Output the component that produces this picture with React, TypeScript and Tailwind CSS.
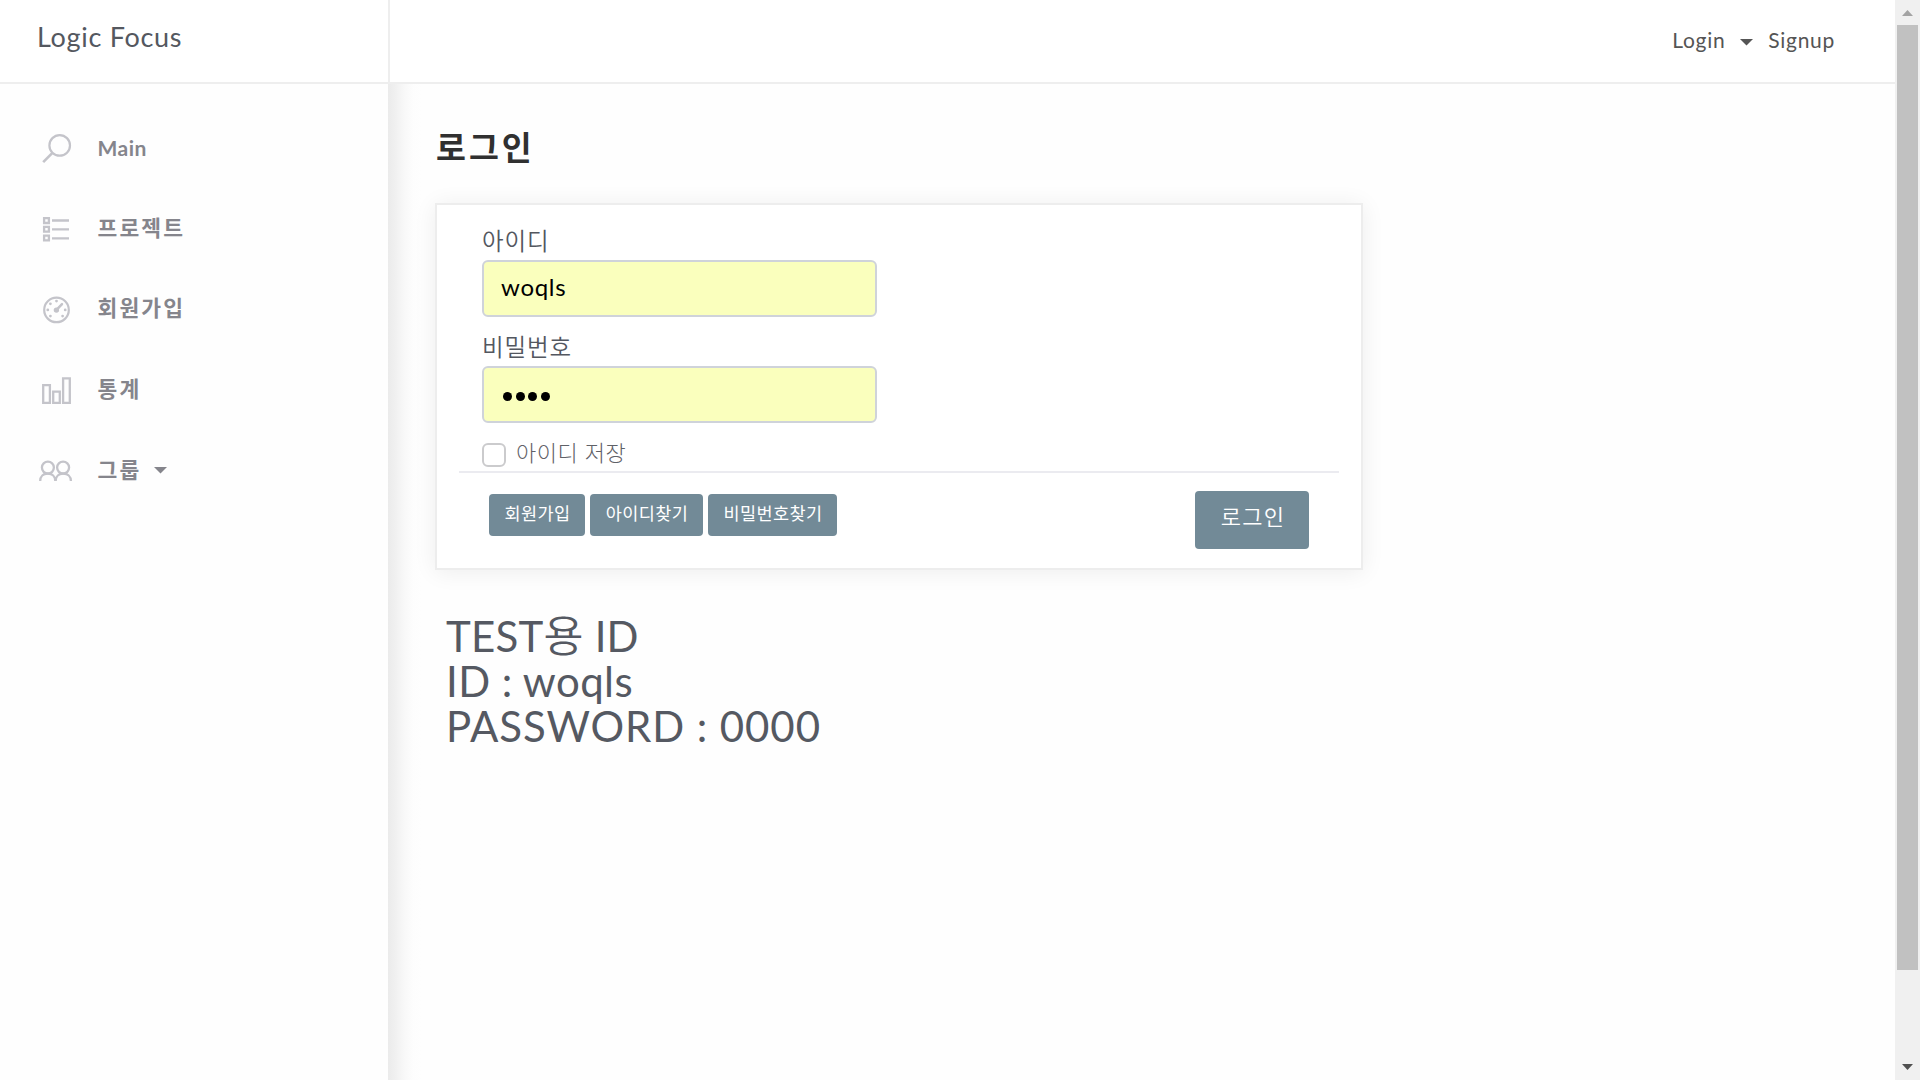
import React from "react";

type NavEntry = { label: string; icon: React.ReactNode; caret?: boolean; className: string };

const SearchIcon = () => (
  <svg width="36" height="36" viewBox="0 0 36 36" fill="none" stroke="#c4c4ca" strokeWidth="2.2">
    <circle cx="21.7" cy="15.4" r="10.3" />
    <path d="M14.2 23.1 5.2 32.1" strokeWidth="2.6" />
  </svg>
);

const ListIcon = () => (
  <svg width="36" height="36" viewBox="0 0 36 36" fill="none" stroke="#c4c4ca" strokeWidth="2.3">
    <path d="M6.1 7.2h4.8v4.8H6.1zM6.1 15.9h4.8v4.8H6.1zM6.1 24.6h4.8v4.8H6.1z" />
    <path d="M14 9.5h17M14 18.4h17M14 27.3h17" />
  </svg>
);

const GaugeIcon = () => (
  <svg width="36" height="36" viewBox="0 0 36 36" fill="none" stroke="#c4c4ca" strokeWidth="2.2">
    <circle cx="18.5" cy="18.9" r="12.3" />
    <path d="M18.5 18.9 24 13.1" strokeWidth="2.5" strokeLinecap="round" />
    <circle cx="18.4" cy="19.1" r="1.6" fill="#c4c4ca" />
    <g fill="#c4c4ca" stroke="none">
      <circle cx="18.5" cy="10.1" r="1.4" />
      <circle cx="12.4" cy="12.8" r="1.4" />
      <circle cx="9.8" cy="18.9" r="1.4" />
      <circle cx="12.4" cy="25.1" r="1.4" />
      <circle cx="24.6" cy="25.1" r="1.4" />
      <circle cx="27.2" cy="18.9" r="1.4" />
    </g>
  </svg>
);

const ChartIcon = () => (
  <svg width="36" height="36" viewBox="0 0 36 36" fill="none" stroke="#c4c4ca" strokeWidth="2.3">
    <path d="M5.2 13.2h6.7v17.6H5.2zM15.2 19.6h6.6v11.2h-6.6zM25.1 6.3h6.7v24.5h-6.7z" />
  </svg>
);

const PeopleIcon = () => (
  <svg width="36" height="36" viewBox="0 0 36 36" fill="none" stroke="#c4c4ca" strokeWidth="2.3">
    <circle cx="9.9" cy="14.6" r="6" />
    <circle cx="25.1" cy="14.6" r="6" />
    <path d="M2.2 27.9c0-4.6 3.2-7.4 7.5-7.4s7.6 2.8 7.6 7.4M17.7 27.9c0-4.6 3.2-7.4 7.5-7.4s7.7 2.8 7.7 7.4" />
  </svg>
);

const Caret = ({ color }: { color: string }) => (
  <svg width="13" height="7" viewBox="0 0 13 7" fill={color}>
    <path d="M0 0h13L6.5 6.5z" />
  </svg>
);

const nav: NavEntry[] = [
  { label: "Main", icon: <SearchIcon />, className: "tracking-[0.5px] font-bold text-[21px]" },
  { label: "프로젝트", icon: <ListIcon />, className: "tracking-[2.1px] font-bold text-[21.5px]" },
  { label: "회원가입", icon: <GaugeIcon />, className: "tracking-[2.1px] font-bold text-[21.5px]" },
  { label: "통계", icon: <ChartIcon />, className: "tracking-[2.1px] font-bold text-[21.5px]" },
  { label: "그룹", icon: <PeopleIcon />, caret: true, className: "tracking-[2.1px] font-bold text-[21.5px]" },
];

function Sidebar() {
  return (
    <aside className="w-[388px] shrink-0 bg-[#fefefe] pl-[38px] pt-[24px]">
      {nav.map((n) => (
        <a key={n.label} className="flex h-[80.6px] items-center text-[#85858c]">
          <span className="w-[59.5px]">{n.icon}</span>
          <span className={`mb-[2px] ${n.className}`}>{n.label}</span>
          {n.caret && <span className="ml-[13px]"><Caret color="#85858c" /></span>}
        </a>
      ))}
    </aside>
  );
}

function SmallButton({ children, width }: { children: string; width: string }) {
  return (
    <button className={`${width} h-[42px] rounded-[4px] bg-[#728a97] pb-[2px] pl-[1px] text-[17.5px] leading-none tracking-[0.4px] text-white`}>
      {children}
    </button>
  );
}

function LoginCard() {
  return (
    <section className="h-[367px] w-[928px] border-2 border-[#ededed] bg-white px-[22px] pt-[20px] shadow-[0_2px_22px_rgba(0,0,0,0.07)]">
      <div className="h-[246px] pl-[23px] text-[#53575f]">
        <div className="h-[35px] text-[23.5px] font-[350] leading-[33px] tracking-[0.9px]">아이디</div>
        <div className="flex h-[57px] w-[395px] items-center rounded-[6px] border-2 border-[#cfd3da] bg-[#faffbd] pb-[3px] pl-[17px] text-[24px] leading-none tracking-[0.7px] text-black">
          woqls
        </div>
        <div className="mt-[14px] h-[35px] text-[23.5px] font-[350] leading-[33px] tracking-[0.9px]">비밀번호</div>
        <div className="flex h-[57px] w-[395px] items-center gap-[3.6px] rounded-[6px] border-2 border-[#cfd3da] bg-[#faffbd] pl-[19px] pt-[4px]">
          {[0, 1, 2, 3].map((i) => (
            <span key={i} className="size-[9px] rounded-full bg-black" />
          ))}
        </div>
        <div className="mt-[20px] flex h-[24px] items-center">
          <span className="size-[24px] rounded-[6px] border-2 border-[#cbcbcd] bg-white" />
          <span className="mb-[4px] ml-[10px] whitespace-nowrap text-[22px] font-light leading-none tracking-[0.5px] text-[#5f6167]">아이디 저장</span>
        </div>
      </div>
      <div className="flex justify-between border-t-2 border-[#ebebf0] pl-[30px] pr-[30px]">
        <div className="flex gap-[5px] pt-[21px]">
          <SmallButton width="w-[96px]">회원가입</SmallButton>
          <SmallButton width="w-[113px]">아이디찾기</SmallButton>
          <SmallButton width="w-[129px]">비밀번호찾기</SmallButton>
        </div>
        <button className="mt-[18px] h-[58px] w-[114px] rounded-[4px] bg-[#728a97] pb-[6px] pl-[2px] text-[22px] font-[350] leading-none tracking-[1.2px] text-white">로그인</button>
      </div>
    </section>
  );
}

function Scrollbar() {
  return (
    <div className="flex h-full w-[25px] shrink-0 flex-col items-center bg-[#f0f0f0]">
      <div className="flex h-[25px] items-center pt-[1px]">
        <svg width="11" height="6" viewBox="0 0 11 6" fill="#a3a3a3"><path d="M0 6h11L5.5 0z" /></svg>
      </div>
      <div className="mr-[2px] h-[945px] w-[21px] self-end bg-[#c1c1c1]" />
      <div className="mt-auto flex h-[26px] items-center">
        <svg width="11" height="6" viewBox="0 0 11 6" fill="#505050"><path d="M0 0h11L5.5 6z" /></svg>
      </div>
    </div>
  );
}

export default function App() {
  return (
    <div className="flex h-[1080px] w-[1920px] overflow-hidden bg-[#fefefe] font-[Lato,'Noto_Sans_CJK_KR',sans-serif]">
      <div className="flex min-w-0 flex-1 flex-col">
        <header className="flex h-[84px] shrink-0 border-b-2 border-[#eeeeee] bg-white">
          <div className="w-[390px] border-r-2 border-[#eeeeee] pl-[37px] pt-[20px] text-[27px] leading-[34px] tracking-[0.7px] text-[#54585f]">Logic Focus</div>
          <nav className="flex flex-1 items-center justify-end pb-[2px] pr-[60px] text-[21px] tracking-[0.7px] text-[#555555]">
            <span>Login</span>
            <span className="ml-[15px] mr-[15px] mt-[5px]"><Caret color="#555555" /></span>
            <span>Signup</span>
          </nav>
        </header>
        <div className="flex min-h-0 flex-1">
          <Sidebar />
          <main className="flex-1 bg-[linear-gradient(to_right,#ebebeb_0px,#efefef_6px,#f8f8f8_16px,#fdfdfd_25px,#fefefe_34px)] pl-[47px] pt-[40px]">
            <h1 className="h-[79px] pl-[1px] text-[32.5px] font-bold leading-[48px] tracking-[3px] text-[#303030]">로그인</h1>
            <LoginCard />
            <div className="ml-[11px] mt-[44px] text-[42px] leading-[45px] text-[#555962]">
              <p className="h-[45px] tracking-[0.2px]">TEST<span className="text-[43.5px] font-[350] leading-none">용</span> ID</p>
              <p className="tracking-[0.4px]">ID : woqls</p>
              <p className="tracking-[0.9px]">PASSWORD : 0000</p>
            </div>
          </main>
        </div>
      </div>
      <Scrollbar />
    </div>
  );
}
